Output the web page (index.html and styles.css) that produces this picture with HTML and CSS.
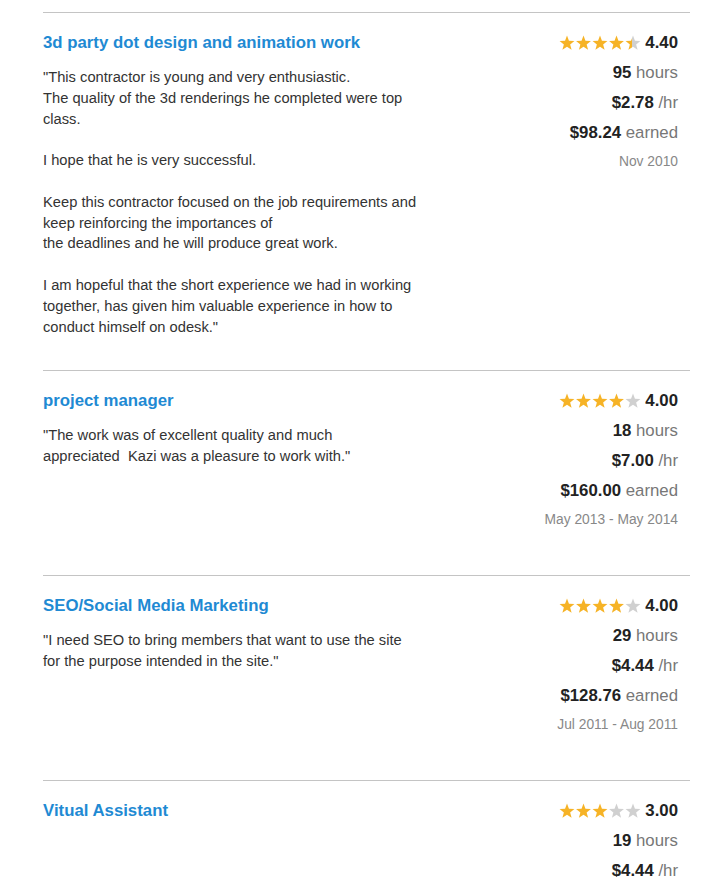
FILE: index.html
```html
<!DOCTYPE html>
<html>
<head>
<meta charset="utf-8">
<link rel="stylesheet" href="styles.css">
</head>
<body>
<svg width="0" height="0" class="defs">
  <defs>
    <polygon id="star" points="8,0.6 9.94,5.73 15.42,5.99 11.14,9.42 12.59,14.71 8,11.7 3.41,14.71 4.86,9.42 0.58,5.99 6.06,5.73"/>
    <linearGradient id="p40" x1="0" x2="1" y1="0" y2="0">
      <stop offset="40%" stop-color="#f6b326"/>
      <stop offset="40%" stop-color="#d0d0d0"/>
    </linearGradient>
  </defs>
</svg>
<div class="list">

  <section class="item">
    <div class="main">
      <h2 class="title">3d party dot design and animation work</h2>
      <p class="comment">"This contractor is young and very enthusiastic.<br>The quality of the 3d renderings he completed were top class.<br><br>I hope that he is very successful.<br><br>Keep this contractor focused on the job requirements and keep reinforcing the importances of<br>the deadlines and he will produce great work.<br><br>I am hopeful that the short experience we had in working together, has given him valuable experience in how to conduct himself on odesk."</p>
    </div>
    <div class="stats">
      <div class="rating">
        <svg class="stars" width="82" height="16" viewBox="0 0 82 16">
          <use href="#star" x="0" class="on"/>
          <use href="#star" x="16.5" class="on"/>
          <use href="#star" x="33" class="on"/>
          <use href="#star" x="49.5" class="on"/>
          <use href="#star" x="66" fill="url(#p40)"/>
        </svg>
        <b>4.40</b>
      </div>
      <div class="stat"><b>95</b> hours</div>
      <div class="stat"><b>$2.78</b> /hr</div>
      <div class="stat"><b>$98.24</b> earned</div>
      <div class="date">Nov 2010</div>
    </div>
  </section>

  <section class="item">
    <div class="main">
      <h2 class="title">project manager</h2>
      <p class="comment">"The work was of excellent quality and much<br>appreciated&nbsp; Kazi was a pleasure to work with."</p>
    </div>
    <div class="stats">
      <div class="rating">
        <svg class="stars" width="82" height="16" viewBox="0 0 82 16">
          <use href="#star" x="0" class="on"/>
          <use href="#star" x="16.5" class="on"/>
          <use href="#star" x="33" class="on"/>
          <use href="#star" x="49.5" class="on"/>
          <use href="#star" x="66" class="off"/>
        </svg>
        <b>4.00</b>
      </div>
      <div class="stat"><b>18</b> hours</div>
      <div class="stat"><b>$7.00</b> /hr</div>
      <div class="stat"><b>$160.00</b> earned</div>
      <div class="date">May 2013 - May 2014</div>
    </div>
  </section>

  <section class="item">
    <div class="main">
      <h2 class="title">SEO/Social Media Marketing</h2>
      <p class="comment">"I need SEO to bring members that want to use the site<br>for the purpose intended in the site."</p>
    </div>
    <div class="stats">
      <div class="rating">
        <svg class="stars" width="82" height="16" viewBox="0 0 82 16">
          <use href="#star" x="0" class="on"/>
          <use href="#star" x="16.5" class="on"/>
          <use href="#star" x="33" class="on"/>
          <use href="#star" x="49.5" class="on"/>
          <use href="#star" x="66" class="off"/>
        </svg>
        <b>4.00</b>
      </div>
      <div class="stat"><b>29</b> hours</div>
      <div class="stat"><b>$4.44</b> /hr</div>
      <div class="stat"><b>$128.76</b> earned</div>
      <div class="date">Jul 2011 - Aug 2011</div>
    </div>
  </section>

  <section class="item">
    <div class="main">
      <h2 class="title">Vitual Assistant</h2>
    </div>
    <div class="stats">
      <div class="rating">
        <svg class="stars" width="82" height="16" viewBox="0 0 82 16">
          <use href="#star" x="0" class="on"/>
          <use href="#star" x="16.5" class="on"/>
          <use href="#star" x="33" class="on"/>
          <use href="#star" x="49.5" class="off"/>
          <use href="#star" x="66" class="off"/>
        </svg>
        <b>3.00</b>
      </div>
      <div class="stat"><b>19</b> hours</div>
      <div class="stat"><b>$4.44</b> /hr</div>
    </div>
  </section>

</div>
</body>
</html>
```

FILE: styles.css
```css
html, body {
  margin: 0;
  padding: 0;
  background: #fff;
}

body {
  font-family: "Liberation Sans", Arial, sans-serif;
  color: #333;
}

.defs {
  position: absolute;
  width: 0;
  height: 0;
}

.list {
  margin-left: 43px;
  width: 647px;
  padding-top: 12px;
}

.item {
  display: flex;
  justify-content: space-between;
  align-items: flex-start;
  border-top: 1px solid #c4c4c4;
  padding: 20px 12px 20px 0;
}

.main {
  width: 385px;
}

.title {
  margin: 0 0 14px 0;
  font-size: 16.8px;
  line-height: 20px;
  font-weight: bold;
  color: #1f8ad3;
}

.comment {
  margin: 0 0 13px 0;
  font-size: 14.7px;
  line-height: 20.8px;
  color: #333;
}

.stats {
  display: flex;
  flex-direction: column;
  align-items: flex-end;
  text-align: right;
  font-size: 16.8px;
  line-height: 20px;
  color: #777;
  padding-bottom: 26px;
}

.stats b {
  color: #222;
  font-weight: bold;
}

.rating {
  display: flex;
  align-items: center;
  gap: 4px;
  height: 20px;
}

.stars {
  display: block;
}

.stars .on {
  fill: #f6b326;
}

.stars .off {
  fill: #d0d0d0;
}

.stat {
  margin-top: 10px;
}

.date {
  margin-top: 10px;
  font-size: 13.8px;
  line-height: 18px;
  color: #888;
}
```
